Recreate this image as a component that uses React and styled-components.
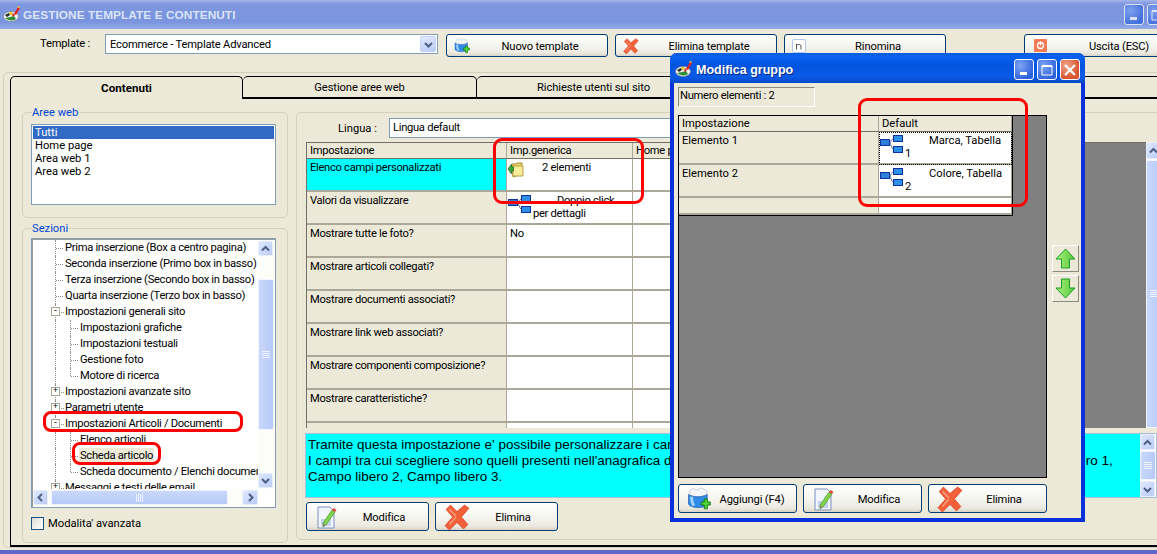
import React from "react";
import styled, { createGlobalStyle } from "styled-components";

const Global = createGlobalStyle`
  html, body { margin: 0; padding: 0; background: #ece9d8; }
  * { box-sizing: border-box; }
`;

const UI_FONT = `Roboto, "Liberation Sans", Arial, sans-serif`;

const Screen = styled.div`
  position: relative;
  width: 1157px;
  height: 554px;
  overflow: hidden;
  background: #ece9d8;
  display: flex;
  flex-direction: column;
  font: 11.2px ${UI_FONT};
  color: #000;
`;

const TitleBar = styled.div`
  height: 29px;
  flex: none;
  display: flex;
  align-items: center;
  padding: 0 0 0 3px;
  gap: 2px;
  background: linear-gradient(180deg, #a3b6ea 0, #7d96df 4px, #7b94de 22px, #8ba5e6 27px, #94aee8 29px);
`;

const TitleText = styled.span`
  font: bold 11.8px "Liberation Sans", Arial, sans-serif;
  color: #d9e4f8;
  flex: 1;
  letter-spacing: 0.08px;
`;

const CaptionGroup = styled.div`
  display: flex;
  gap: 3px;
  flex: none;
  margin-right: ${p => p.$mr}px;
`;

const CaptionButton = styled.div`
  width: 20px;
  height: 21px;
  flex: none;
  border: 1px solid #fff;
  border-radius: 3px;
  display: flex;
  align-items: center;
  justify-content: center;
  background: ${p => p.$close
    ? "radial-gradient(circle at 30% 30%, #f0a48a, #d9532f 70%)"
    : "radial-gradient(circle at 30% 30%, #7ea4f2, #2f62dd 75%)"};
  opacity: ${p => p.$faded ? 0.72 : 1};
`;

const Toolbar = styled.div`
  height: 41px;
  flex: none;
  display: flex;
  align-items: flex-start;
  padding: 5px 0 0 40px;
`;

const ToolLabel = styled.span`
  width: 65px;
  flex: none;
  line-height: 20px;
  letter-spacing: -0.2px;
`;

const Combo = styled.div`
  width: 333px;
  height: 20px;
  flex: none;
  margin-right: 8px;
  background: #fff;
  border: 1px solid #7f9db9;
  display: flex;
  align-items: center;
  padding: 0 1px 0 4px;
  justify-content: space-between;
  letter-spacing: -0.2px;
`;

const ComboArrow = styled.div`
  width: 16px;
  height: 16px;
  border-radius: 2px;
  background: linear-gradient(160deg, #e3ebfd, #b7c9f6);
  border: 1px solid #c3d3f8;
  display: flex;
  align-items: center;
  justify-content: center;
`;

const Button = styled.button`
  width: ${p => p.$w}px;
  height: ${p => p.$h}px;
  flex: none;
  margin: 0 ${p => p.$mr || 0}px 0 0;
  padding: 0 0 0 ${p => p.$pad || 4}px;
  display: flex;
  align-items: center;
  font: 11.2px ${UI_FONT};
  letter-spacing: -0.15px;
  color: #000;
  border: 1px solid #003c74;
  border-radius: 3px;
  background: linear-gradient(180deg, #fff 0, #f4f4ee 55%, #ece9e0 85%, #d8d4c8 100%);
`;

const ButtonIcon = styled.span`
  width: ${p => p.$w}px;
  flex: none;
  display: flex;
  align-items: center;
`;

const ButtonLabel = styled.span`
  flex: 1;
  text-align: center;
  white-space: nowrap;
  padding: 1px 3px 0 0;
`;

const TabFrame = styled.div`
  flex: 1;
  min-height: 0;
  margin: 2px -60px 6px 3px;
  padding: 3px 0 0 6px;
  border: 1px solid #d4d0bd;
  border-radius: 5px;
  display: flex;
  flex-direction: column;
`;

const TabStrip = styled.div`
  height: 22px;
  flex: none;
  display: flex;
`;

const Tab = styled.div`
  width: ${p => p.$w}px;
  flex: none;
  height: ${p => p.$active ? 23 : 22}px;
  position: relative;
  z-index: ${p => p.$active ? 1 : 0};
  display: flex;
  align-items: center;
  justify-content: center;
  background: #ece9d8;
  border: 1px solid #000;
  border-bottom: ${p => p.$active ? "none" : "1px solid #000"};
  border-left: ${p => p.$active ? "1px solid #000" : "none"};
  border-radius: 5px 5px 0 0;
  font-weight: ${p => p.$active ? "bold" : "normal"};
  font-size: ${p => p.$active ? "11.6px" : "inherit"};
  letter-spacing: ${p => p.$active ? 0 : -0.1}px;
`;

const TabPanel = styled.div`
  flex: 1;
  min-height: 0;
  display: flex;
  gap: 8px;
  padding: 7px 0 5px 11px;
  border: 1px solid #000;
  border-bottom-width: 2px;
`;

const Column = styled.div`
  width: 266px;
  flex: none;
  display: flex;
  flex-direction: column;
  gap: 4px;
`;

const Group = styled.fieldset`
  margin: 0;
  min-width: 0;
  flex: ${p => p.$grow ? 1 : "none"};
  padding: ${p => p.$top}px 11px 12px 8px;
  border: 1px solid #d4d0bd;
  border-radius: 5px;
`;

const GroupTitle = styled.legend`
  padding: 0;
  margin-left: 1px;
  color: #0046d5;
  line-height: 13px;
`;

const ListBox = styled.div`
  height: 81px;
  background: #fff;
  border: 1px solid #7f9db9;
  padding: 1px;
`;

const ListItem = styled.div`
  height: 13px;
  line-height: 13px;
  padding-left: 2px;
  background: ${p => p.$selected ? "#316ac5" : "transparent"};
  color: ${p => p.$selected ? "#fff" : "#000"};
`;

const TreeFrame = styled.div`
  height: 270px;
  background: #fff;
  border: 1px solid #7f9db9;
  box-shadow: inset 1px 1px 0 #9d9d92;
  padding: 1px;
  display: grid;
  grid-template-columns: 1fr 16px;
  grid-template-rows: 1fr 17px;
`;

const TreeBody = styled.div`
  overflow: hidden;
  min-width: 0;
  letter-spacing: -0.3px;
`;

const TreeRow = styled.div`
  position: relative;
  height: 16px;
  line-height: 16px;
  white-space: nowrap;
  padding-left: ${p => p.$level === 2 ? 46 : 31}px;
`;

const Rail = styled.i`
  position: absolute;
  left: ${p => p.$x}px;
  top: 0;
  height: ${p => p.$half ? 8 : 16}px;
  border-left: 1px dotted #8f8f85;
`;

const Spur = styled.i`
  position: absolute;
  left: ${p => p.$x}px;
  top: 8px;
  width: ${p => p.$w}px;
  border-top: 1px dotted #8f8f85;
`;

const Expander = styled.b`
  position: absolute;
  left: 18px;
  top: 3px;
  width: 9px;
  height: 9px;
  background: #fff;
  border: 1px solid #a8a793;
  font: 9px/7px "Liberation Mono", monospace;
  letter-spacing: 0;
  text-align: center;
  color: #000;
`;

const RowText = styled.span`
  display: inline-block;
  line-height: 15px;
  padding: 0 1px;
  background: ${p => p.$hi ? "#ece9d8" : "transparent"};
`;

const ScrollV = styled.div`
  width: 16px;
  height: ${p => p.$h ? `${p.$h}px` : "auto"};
  flex: none;
  display: flex;
  flex-direction: column;
  background: #fcfcf9;
  padding: ${p => p.$pad || 0}px 0;
`;

const ScrollH = styled.div`
  display: flex;
  height: 17px;
  background: #fcfcf9;
  padding: 1px 0;
`;

const ScrollBtn = styled.div`
  width: ${p => p.$w || 15}px;
  height: ${p => p.$h || 15}px;
  flex: none;
  border: 1px solid #e6edfd;
  border-radius: 2px;
  background: linear-gradient(135deg, #dfe8fd, #b9cbf7);
  display: flex;
  align-items: center;
  justify-content: center;
`;

const Thumb = styled.div`
  flex: 1;
  margin: ${p => p.$margin};
  min-height: 0;
  border: 1px solid #eef3fe;
  border-radius: 2px;
  background: linear-gradient(${p => p.$horizontal ? "180deg" : "90deg"}, #c9d8fb, #b6c9f8);
  display: flex;
  align-items: center;
  justify-content: center;
`;

const ScrollGap = styled.div`
  flex: none;
  height: ${p => p.$h ? `${p.$h}px` : "auto"};
  width: ${p => p.$w ? `${p.$w}px` : "auto"};
`;

const Check = styled.label`
  display: flex;
  align-items: center;
  gap: 4px;
  margin-top: 9px;
  line-height: 13px;
`;

const CheckBox = styled.span`
  width: 13px;
  height: 13px;
  border: 1px solid #1c5180;
  background: linear-gradient(135deg, #dcdcd7, #fff);
`;

const RightGroup = styled.div`
  width: 900px;
  flex: none;
  margin-top: 6px;
  border: 1px solid #d4d0bd;
  border-radius: 5px;
  padding: 5px 0 0 9px;
  display: flex;
  flex-direction: column;
`;

const LangRow = styled.div`
  display: flex;
  height: 20px;
  flex: none;
  align-items: center;
  padding-left: 32px;
`;

const LangLabel = styled.span`
  width: 51px;
  flex: none;
`;

const LangInput = styled.div`
  width: 500px;
  height: 20px;
  background: #fff;
  border: 1px solid #7f9db9;
  line-height: 18px;
  padding-left: 3px;
  letter-spacing: -0.3px;
`;

const GridRow = styled.div`
  display: flex;
  margin-top: 4px;
  height: 286px;
  flex: none;
`;

const GridArea = styled.div`
  background: #808080;
  overflow: hidden;
  flex: none;
  width: ${p => p.$w}px;
  height: ${p => p.$h}px;
  border: 1px solid ${p => p.$dark ? "#000" : "#716f64"};
  border-right: ${p => p.$dark ? "1px solid #000" : "none"};
  border-bottom: ${p => p.$dark ? "1px solid #000" : "none"};
`;

const Table = styled.div`
  display: grid;
  width: max-content;
  grid-template-columns: ${p => p.$cols};
  grid-template-rows: ${p => p.$template};
  letter-spacing: ${p => p.$tight ? -0.3 : 0}px;
  border-bottom: ${p => p.$closed ? "1px solid #000" : "none"};
  border-right: ${p => p.$closed ? "1px solid #000" : "none"};
`;

const Cell = styled.div`
  border-right: 1px solid #aca899;
  border-bottom: 2px solid #aca899;
  padding: 2px 3px;
  background: ${p => p.$tone === "sel" ? "#00ffff" : p.$tone === "white" ? "#fff" : "#ece9d8"};
  overflow: hidden;
  line-height: 13px;
  outline: ${p => p.$focus ? "1px dotted #000" : "none"};
  outline-offset: -1px;
`;

const HeadCell = styled.div`
  background: #ece9d8;
  border-right: 1px solid #aca899;
  border-bottom: 1px solid #716f64;
  padding: 1px 3px;
  line-height: 13px;
  white-space: nowrap;
`;

const CellIcon = styled.span`
  float: left;
  width: 25px;
  height: 22px;
  margin: 1px 0 0 -2px;
`;

const CellValue = styled.div`
  text-indent: ${p => p.$indent}px;
  line-height: 13px;
`;

const Description = styled.div`
  flex: none;
  display: flex;
  height: 65px;
  margin: 5px 0 0 -1px;
  width: 852px;
  border: 1px solid #a8c0d8;
  background: #00ffff;
`;

const DescriptionText = styled.div`
  flex: 1;
  font: 13.5px/16px "Liberation Sans", Arial, sans-serif;
  padding: 3px 2px 0;
  white-space: nowrap;
  overflow: hidden;
`;

const BtnRow = styled.div`
  display: flex;
  gap: ${p => p.$gap}px;
  margin-top: ${p => p.$top}px;
  flex: none;
`;

const Dialog = styled.section`
  position: absolute;
  left: 670px;
  top: 53px;
  width: 415px;
  height: 469px;
  background: #ece9d8;
  border: 4px solid #0831d9;
  border-top: none;
  border-radius: 7px 7px 0 0;
  display: flex;
  flex-direction: column;
`;

const DialogTitle = styled.header`
  height: 30px;
  margin: 0 -4px;
  flex: none;
  display: flex;
  align-items: center;
  gap: 3px;
  padding: 3px 5px 0 5px;
  border-radius: 7px 7px 0 0;
  background: linear-gradient(180deg, #0a5bdc 0, #0a62ec 3px, #0255e0 12px, #0a5ae6 24px, #0349c6 30px);
  color: #fff;
  font: bold 12.5px "Liberation Sans", Arial, sans-serif;
  text-shadow: 1px 1px 0 #0a2a8a;
`;

const DialogName = styled.span`
  flex: 1;
`;

const DialogBody = styled.div`
  flex: 1;
  min-height: 0;
  padding: 4px 0 0 4px;
  display: flex;
  flex-direction: column;
`;

const CountBox = styled.div`
  width: 137px;
  height: 20px;
  flex: none;
  border: 1px solid;
  border-color: #8b8a80 #fff #fff #8b8a80;
  line-height: 15px;
  padding-left: 1px;
  letter-spacing: -0.3px;
`;

const GridLine = styled.div`
  display: flex;
  margin-top: 8px;
  gap: 5px;
  flex: none;
`;

const MoveCol = styled.div`
  display: flex;
  flex-direction: column;
  gap: 3px;
  padding-top: 130px;
`;

const MoveButton = styled.div`
  width: 27px;
  height: 27px;
  background: #ece9d8;
  border: 1px solid;
  border-color: #fff #8b8a80 #8b8a80 #fff;
  display: flex;
  align-items: center;
  justify-content: center;
`;

const Ink = styled.div`
  position: absolute;
  left: ${p => p.$x}px;
  top: ${p => p.$y}px;
  width: ${p => p.$w}px;
  height: ${p => p.$h}px;
  border: 3px solid #f00;
  border-radius: ${p => p.$r}px;
  pointer-events: none;
`;

const BottomBand = styled.div`
  position: absolute;
  left: 0;
  right: 0;
  bottom: 0;
  height: 4px;
  background: #5f68c9;
`;

const Chevron = ({ dir = "down", size = 9, color = "#4d6185" }) => {
  const d = { down: "M1 3l3.5 3.5L8 3", up: "M1 6.5L4.5 3 8 6.5", left: "M6 1L2.5 4.5 6 8", right: "M3 1l3.5 3.5L3 8" }[dir];
  return <svg width={size} height={size} viewBox="0 0 9 9"><path d={d} fill="none" stroke={color} strokeWidth="2" /></svg>;
};

const Grip = ({ vertical }) => (
  <svg width={8} height={8} viewBox="0 0 8 8">
    {vertical
      ? [0, 2, 4, 6].map(y => <rect key={y} x="0" y={y} width="8" height="1" fill="#eef3fe" />)
      : [0, 2, 4, 6].map(x => <rect key={x} x={x} y="0" width="1" height="8" fill="#eef3fe" />)}
  </svg>
);

const AppLogo = () => (
  <svg width="18" height="17" viewBox="0 0 18 17">
    <ellipse cx="8" cy="10.500" rx="7.500" ry="5" fill="#f2f2ee" stroke="#7a8088" strokeWidth=".7" />
    <path d="M2 12c3 3 9 3 11 1l-2-3-4 1z" fill="#2f8f3a" />
    <path d="M2 9l4-2 1 2-3 2z" fill="#2a2a2a" />
    <path d="M6 6l3 0 0 3-2 0z" fill="#f0c820" />
    <path d="M10 7l2 2-2 2-1-2z" fill="#d83020" />
    <path d="M11 8l4-7 2 1-4 7z" fill="#e02020" />
    <path d="M14 1l1-1 2 1-1 1z" fill="#f0d020" />
  </svg>
);

const Bucket = ({ size = 16 }) => (
  <svg width={size} height={size} viewBox="0 0 32 32">
    <path d="M3 7l4-5 7 2 5-3 7 4 1 5-13 4L4 11z" fill="#f4f5f7" stroke="#b8bec8" />
    <path d="M2 10c6 4 19 4 25 0v13c-3 6-21 6-25 0z" fill="#2f8be6" stroke="#2b68b0" />
    <path d="M6 13c0 5 1 9 3 12" stroke="#9fd2fa" strokeWidth="4" fill="none" />
    <path d="M19 20h4v-4h4v4h4v4h-4v5h-4v-5h-4z" fill="#4fd838" stroke="#157a12" strokeWidth="1.300" />
  </svg>
);

const Cross = ({ size = 16 }) => (
  <svg width={size} height={size} viewBox="0 0 24 24">
    <path d="M2 5l4-4 6 6 7-6 4 3-7 8 6 7-4 4-6-6-7 7-4-4 7-8z" fill="#f2603a" stroke="#dc4a2c" strokeWidth=".8" strokeLinejoin="round" />
    <path d="M5 5l6 6M11 12l-6 7" stroke="#f89a78" strokeWidth="1.500" />
  </svg>
);

const LetterN = () => (
  <svg width="14" height="14" viewBox="0 0 14 14">
    <rect x=".5" y=".5" width="13" height="13" rx="1.500" fill="#fff" stroke="#b5c6ee" />
    <path d="M4.500 10.500V5M4.500 6.500c1-1.500 4.500-1.500 4.500 .5v3.500" fill="none" stroke="#555" strokeWidth="1" />
  </svg>
);

const ExitIcon = () => (
  <svg width="13" height="13" viewBox="0 0 13 13">
    <rect width="13" height="13" rx="1" fill="#f47a55" />
    <circle cx="6.500" cy="6.500" r="3" fill="none" stroke="#fff" strokeWidth="1.300" />
    <rect x="5.800" y="2.500" width="1.400" height="4" fill="#fff" />
  </svg>
);

const Pencil = () => (
  <svg width="22" height="24" viewBox="0 0 22 24">
    <path d="M1 2h12l4 4v17H1z" fill="#f2f5fc" stroke="#7c8fc0" />
    <rect x="4" y="14" width="10" height="7" fill="#c5d2ee" />
    <path d="M6 18L15 5l3 2-9 13-3 2z" fill="#7fd34a" stroke="#4f9a2a" strokeWidth=".7" />
    <path d="M15 5l1.500-2 3 2-1.500 2z" fill="#e2443a" />
    <path d="M6 18l0 4 3-2z" fill="#8a8a78" />
  </svg>
);

const TreeIcon = () => (
  <svg width="23" height="18" viewBox="0 0 23 18">
    <rect x=".5" y="4.500" width="9" height="6" fill="#2d7fdc" stroke="#10309a" />
    <rect x="13.500" y=".5" width="9" height="6" fill="#2d90e4" stroke="#10309a" />
    <rect x="13.500" y="11.500" width="9" height="6" fill="#2d90e4" stroke="#10309a" />
    <path d="M13 4c-2 1-2 2-3 4 1 2 1 4 3 6" fill="none" stroke="#56668c" />
  </svg>
);

const FolderIcon = () => (
  <svg width="16" height="16" viewBox="0 0 16 16">
    <path d="M4 2h4l1-1h5v11l-9 3z" fill="#e6d468" stroke="#a59038" />
    <path d="M5 4h10v10H5z" fill="#f6ec9a" stroke="#b8a040" />
    <path d="M0 7l3.500-5v3h2v4h-2v3z" fill="#3ca83c" stroke="#1a6a1a" strokeWidth=".7" />
  </svg>
);

const Arrow = ({ down }) => (
  <svg width="21" height="21" viewBox="0 0 21 21" style={{ transform: down ? "scaleY(-1)" : "none" }}>
    <defs>
      <linearGradient id="greenfill" x1="0" x2="1">
        <stop offset="0" stopColor="#a8f07a" />
        <stop offset="1" stopColor="#57c93a" />
      </linearGradient>
    </defs>
    <path d="M10.500 1L20 11h-5.500v9h-8v-9H1z" fill="url(#greenfill)" stroke="#1f9a28" />
  </svg>
);

const Item = ({ level, text, rails = [], spur, exp, half, hi }) => (
  <TreeRow $level={level}>
    {rails.map(x => <Rail key={x} $x={x} />)}
    {half && <Rail $x={half} $half />}
    {spur && <Spur $x={spur[0]} $w={spur[1]} />}
    {exp && <Expander>{exp}</Expander>}
    <RowText $hi={hi}>{text}</RowText>
  </TreeRow>
);

const tree = [
  [1, "Prima inserzione (Box a centro pagina)"],
  [1, "Seconda inserzione (Primo box in basso)"],
  [1, "Terza inserzione (Secondo box in basso)"],
  [1, "Quarta inserzione (Terzo box in basso)"],
  [1, "Impostazioni generali sito", "-"],
  [2, "Impostazioni grafiche"],
  [2, "Impostazioni testuali"],
  [2, "Gestione foto"],
  [2, "Motore di ricerca", null, true],
  [1, "Impostazioni avanzate sito", "+"],
  [1, "Parametri utente", "+"],
  [1, "Impostazioni Articoli / Documenti", "-"],
  [2, "Elenco articoli"],
  [2, "Scheda articolo"],
  [2, "Scheda documento / Elenchi documenti", null, true],
  [1, "Messaggi e testi delle email", "+"],
];

const mainRows = [
  "Valori da visualizzare",
  "Mostrare tutte le foto?",
  "Mostrare articoli collegati?",
  "Mostrare documenti associati?",
  "Mostrare link web associati?",
  "Mostrare componenti composizione?",
  "Mostrare caratteristiche?",
];

const WindowButtons = ({ close, faded, mr = 0 }) => (
  <CaptionGroup $mr={mr}>
    <CaptionButton $faded={faded}>
      <svg width="12" height="12" viewBox="0 0 12 12"><rect x="2" y="8" width="7" height="3" fill="#fff" /></svg>
    </CaptionButton>
    <CaptionButton $faded={faded}>
      <svg width="14" height="14" viewBox="0 0 14 14"><path d="M2 3h10v9H2z" fill="none" stroke="#fff" /><rect x="2" y="2" width="10" height="2" fill="#fff" /></svg>
    </CaptionButton>
    {close && (
      <CaptionButton $close>
        <svg width="14" height="14" viewBox="0 0 14 14"><path d="M2 2l10 10M12 2L2 12" stroke="#fff" strokeWidth="2.200" /></svg>
      </CaptionButton>
    )}
  </CaptionGroup>
);

export default function App() {
  return (
    <Screen>
      <Global />
      <TitleBar>
        <AppLogo />
        <TitleText>GESTIONE TEMPLATE E CONTENUTI</TitleText>
        <WindowButtons faded mr={-10} />
      </TitleBar>

      <Toolbar>
        <ToolLabel>Template :</ToolLabel>
        <Combo>
          <span>Ecommerce - Template Advanced</span>
          <ComboArrow><Chevron /></ComboArrow>
        </Combo>
        <Button $w={162} $h={23} $mr={7} $pad={7}><ButtonIcon $w={22}><Bucket /></ButtonIcon><ButtonLabel>Nuovo template</ButtonLabel></Button>
        <Button $w={162} $h={23} $mr={7} $pad={7}><ButtonIcon $w={22}><Cross /></ButtonIcon><ButtonLabel>Elimina template</ButtonLabel></Button>
        <Button $w={162} $h={23} $mr={78} $pad={7}><ButtonIcon $w={22}><LetterN /></ButtonIcon><ButtonLabel>Rinomina</ButtonLabel></Button>
        <Button $w={162} $h={23} $pad={9}><ButtonIcon $w={22}><ExitIcon /></ButtonIcon><ButtonLabel>Uscita (ESC)</ButtonLabel></Button>
      </Toolbar>

      <TabFrame>
        <TabStrip>
          <Tab $active $w={233}>Contenuti</Tab>
          <Tab $w={234}>Gestione aree web</Tab>
          <Tab $w={234}>Richieste utenti sul sito</Tab>
          <Tab $w={500}>Pubblicazione</Tab>
        </TabStrip>
        <TabPanel>
          <Column>
            <Group $top={5}>
              <GroupTitle>Aree web</GroupTitle>
              <ListBox>
                <ListItem $selected>Tutti</ListItem>
                <ListItem>Home page</ListItem>
                <ListItem>Area web 1</ListItem>
                <ListItem>Area web 2</ListItem>
              </ListBox>
            </Group>
            <Group $grow $top={3}>
              <GroupTitle>Sezioni</GroupTitle>
              <TreeFrame>
                <TreeBody>
                  {tree.map(([level, text, exp, last]) => (
                    <Item
                      key={text}
                      level={level}
                      text={text}
                      exp={exp}
                      rails={level === 2 && !last ? [22, 37] : [22]}
                      half={level === 2 && last ? 37 : undefined}
                      spur={level === 2 ? [38, 7] : [exp ? 28 : 23, exp ? 3 : 7]}
                      hi={text === "Scheda articolo"}
                    />
                  ))}
                </TreeBody>
                <ScrollV $pad={1}>
                  <ScrollBtn><Chevron dir="up" /></ScrollBtn>
                  <ScrollGap $h={23} />
                  <Thumb $margin="0"><Grip vertical /></Thumb>
                  <ScrollGap $h={43} />
                  <ScrollBtn><Chevron /></ScrollBtn>
                </ScrollV>
                <ScrollH>
                  <ScrollBtn><Chevron dir="left" /></ScrollBtn>
                  <ScrollGap $w={3} />
                  <Thumb $horizontal $margin="0"><Grip /></Thumb>
                  <ScrollGap $w={14} />
                  <ScrollBtn $w={16}><Chevron dir="right" /></ScrollBtn>
                </ScrollH>
                <span />
              </TreeFrame>
              <Check><CheckBox />Modalita' avanzata</Check>
            </Group>
          </Column>

          <RightGroup>
            <LangRow>
              <LangLabel>Lingua :</LangLabel>
              <LangInput>Lingua default</LangInput>
            </LangRow>
            <GridRow>
              <GridArea $w={840} $h={286}>
                <Table $tight $cols="200px 126px 180px" $template="16px repeat(8, 33px) 12px">
                  <HeadCell>Impostazione</HeadCell>
                  <HeadCell>Imp.generica</HeadCell>
                  <HeadCell>Home page</HeadCell>
                  <Cell $tone="sel">Elenco campi personalizzati</Cell>
                  <Cell $tone="white">
                    <CellIcon><FolderIcon /></CellIcon>
                    <CellValue $indent={9}>2 elementi</CellValue>
                  </Cell>
                  <Cell $tone="white" />
                  {mainRows.map((label, i) => (
                    <React.Fragment key={label}>
                      <Cell>{label}</Cell>
                      {i === 0 ? (
                        <Cell $tone="white">
                          <CellIcon><TreeIcon /></CellIcon>
                          <CellValue $indent={24}>Doppio click per dettagli</CellValue>
                        </Cell>
                      ) : (
                        <Cell $tone="white">{i === 1 ? "No" : ""}</Cell>
                      )}
                      <Cell $tone="white" />
                    </React.Fragment>
                  ))}
                  <Cell />
                  <Cell $tone="white" />
                  <Cell $tone="white" />
                </Table>
              </GridArea>
              <ScrollV>
                <ScrollBtn $h={17}><Chevron dir="up" /></ScrollBtn>
                <Thumb $margin="1px 0 0"><Grip vertical /></Thumb>
              </ScrollV>
            </GridRow>
            <Description>
              <DescriptionText>
                Tramite questa impostazione e' possibile personalizzare i campi visualizzati nella scheda dell'articolo.<br />
                I campi tra cui scegliere sono quelli presenti nell'anagrafica degli articoli: Marca, Modello, Colore, Tipologia, Categoria, Campo libero 1,<br />
                Campo libero 2, Campo libero 3.
              </DescriptionText>
              <ScrollV $h={63}>
                <ScrollBtn $h={16}><Chevron dir="up" /></ScrollBtn>
                <Thumb $margin="1px 0"><Grip vertical /></Thumb>
                <ScrollBtn $h={16}><Chevron /></ScrollBtn>
              </ScrollV>
            </Description>
            <BtnRow $gap={6} $top={4}>
              <Button $w={123} $h={29} $pad={10}><ButtonIcon $w={26}><Pencil /></ButtonIcon><ButtonLabel>Modifica</ButtonLabel></Button>
              <Button $w={123} $h={29} $pad={8}><ButtonIcon $w={28}><Cross size={26} /></ButtonIcon><ButtonLabel>Elimina</ButtonLabel></Button>
            </BtnRow>
          </RightGroup>
        </TabPanel>
      </TabFrame>
      <BottomBand />

      <Dialog>
        <DialogTitle>
          <AppLogo />
          <DialogName>Modifica gruppo</DialogName>
          <WindowButtons close />
        </DialogTitle>
        <DialogBody>
          <CountBox>Numero elementi : 2</CountBox>
          <GridLine>
            <GridArea $dark $w={369} $h={363}>
              <Table $closed $cols="200px 133px" $template="16px 33px 33px 17px">
                <HeadCell>Impostazione</HeadCell>
                <HeadCell>Default</HeadCell>
                <Cell>Elemento 1</Cell>
                <Cell $tone="white" $focus>
                  <CellIcon><TreeIcon /></CellIcon>
                  <CellValue $indent={24}>Marca, Tabella 1</CellValue>
                </Cell>
                <Cell>Elemento 2</Cell>
                <Cell $tone="white">
                  <CellIcon><TreeIcon /></CellIcon>
                  <CellValue $indent={24}>Colore, Tabella 2</CellValue>
                </Cell>
                <Cell />
                <Cell $tone="white" />
              </Table>
            </GridArea>
            <MoveCol>
              <MoveButton><Arrow /></MoveButton>
              <MoveButton><Arrow down /></MoveButton>
            </MoveCol>
          </GridLine>
          <BtnRow $gap={6} $top={6}>
            <Button $w={119} $h={29} $pad={8}><ButtonIcon $w={24}><Bucket size={26} /></ButtonIcon><ButtonLabel>Aggiungi (F4)</ButtonLabel></Button>
            <Button $w={119} $h={29} $pad={10}><ButtonIcon $w={26}><Pencil /></ButtonIcon><ButtonLabel>Modifica</ButtonLabel></Button>
            <Button $w={119} $h={29} $pad={8}><ButtonIcon $w={28}><Cross size={26} /></ButtonIcon><ButtonLabel>Elimina</ButtonLabel></Button>
          </BtnRow>
        </DialogBody>
      </Dialog>

      <Ink $x={43} $y={411} $w={200} $h={21} $r={8} />
      <Ink $x={72} $y={442} $w={89} $h={23} $r={8} />
      <Ink $x={493} $y={138} $w={151} $h={66} $r={9} />
      <Ink $x={858} $y={98} $w={170} $h={109} $r={9} />
    </Screen>
  );
}
